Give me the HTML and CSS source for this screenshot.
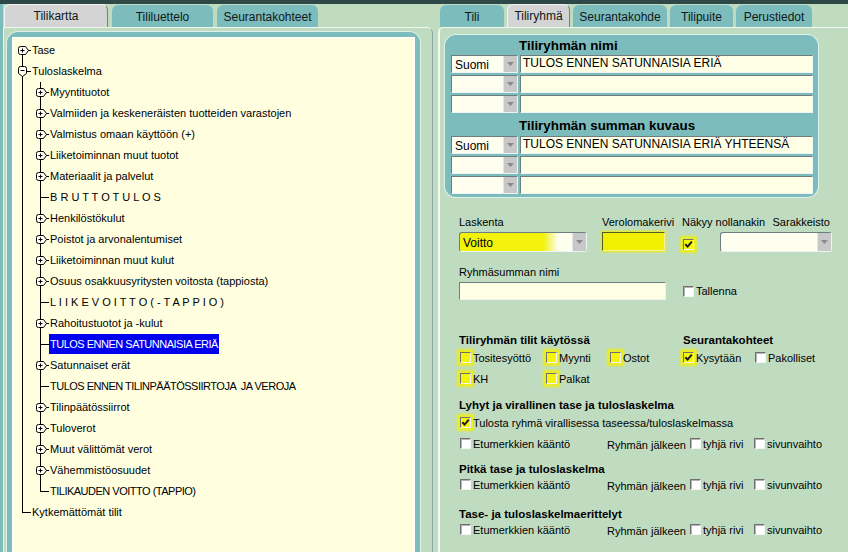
FILE: index.html
```html
<!DOCTYPE html>
<html lang="fi">
<head>
<meta charset="utf-8">
<title>Tiliryhmä</title>
<link rel="stylesheet" href="styles.css">
</head>
<body>
<svg class="sprite" aria-hidden="true">
  <symbol id="i-plus" viewBox="0 0 11 9"><path d="M2.5 .5H7.5L10.5 4.5L7.5 8.5H2.5Q.5 8.5 .5 6.5V2.5Q.5 .5 2.5 .5Z" fill="#fffff4" stroke="#000"/><path d="M2.5 4.5H6.5M4.5 2.5V6.5" stroke="#000"/></symbol>
  <symbol id="i-minus" viewBox="0 0 9 11"><path d="M.5 2.5Q.5 .5 2.5 .5H6.5Q8.5 .5 8.5 2.5V7.5L4.5 10.5L.5 7.5Z" fill="#fffff4" stroke="#000"/><path d="M2.5 4.5H6.5" stroke="#000"/></symbol>
  <symbol id="i-check" viewBox="0 0 9 9"><path d="M1.3 4.2L3.6 6.6L7.8 1.6" fill="none" stroke="#1c1c1c" stroke-width="2"/></symbol>
  <symbol id="i-down" viewBox="0 0 7 4"><path d="M0 0H7L3.5 4Z" fill="#8a8a8a"/></symbol>
</svg>
<div class="topbar"></div>
<div class="main">
  <section class="pane-left">
    <nav class="tabs tabs-left">
      <div class="tab active tab-tilikartta">Tilikartta</div>
      <div class="tab tab-tililuettelo">Tililuettelo</div>
      <div class="tab tab-seurantakohteet">Seurantakohteet</div>
    </nav>
    <div class="body-left">
      <div class="tree-frame">
        <div class="tree">
          <div class="row"><span class="cell start"><svg class="exp"><use href="#i-plus"/></svg></span><span class="lbl">Tase</span></div>
          <div class="row"><span class="cell tee"><svg class="exp-down"><use href="#i-minus"/></svg></span><span class="lbl">Tuloslaskelma</span></div>
          <div class="row"><span class="cell v"></span><span class="cell tee"><svg class="exp"><use href="#i-plus"/></svg></span><span class="lbl">Myyntituotot</span></div>
          <div class="row"><span class="cell v"></span><span class="cell tee"><svg class="exp"><use href="#i-plus"/></svg></span><span class="lbl">Valmiiden ja keskeneräisten tuotteiden varastojen</span></div>
          <div class="row"><span class="cell v"></span><span class="cell tee"><svg class="exp"><use href="#i-plus"/></svg></span><span class="lbl">Valmistus omaan käyttöön (+)</span></div>
          <div class="row"><span class="cell v"></span><span class="cell tee"><svg class="exp"><use href="#i-plus"/></svg></span><span class="lbl">Liiketoiminnan muut tuotot</span></div>
          <div class="row"><span class="cell v"></span><span class="cell tee"><svg class="exp"><use href="#i-plus"/></svg></span><span class="lbl">Materiaalit ja palvelut</span></div>
          <div class="row"><span class="cell v"></span><span class="cell tee"></span><span class="lbl">B R U T T O T U L O S</span></div>
          <div class="row"><span class="cell v"></span><span class="cell tee"><svg class="exp"><use href="#i-plus"/></svg></span><span class="lbl">Henkilöstökulut</span></div>
          <div class="row"><span class="cell v"></span><span class="cell tee"><svg class="exp"><use href="#i-plus"/></svg></span><span class="lbl">Poistot ja arvonalentumiset</span></div>
          <div class="row"><span class="cell v"></span><span class="cell tee"><svg class="exp"><use href="#i-plus"/></svg></span><span class="lbl">Liiketoiminnan muut kulut</span></div>
          <div class="row"><span class="cell v"></span><span class="cell tee"><svg class="exp"><use href="#i-plus"/></svg></span><span class="lbl">Osuus osakkuusyritysten voitosta (tappiosta)</span></div>
          <div class="row"><span class="cell v"></span><span class="cell tee"></span><span class="lbl">L I I K E V O I T T O ( - T A P P I O )</span></div>
          <div class="row"><span class="cell v"></span><span class="cell tee"><svg class="exp"><use href="#i-plus"/></svg></span><span class="lbl">Rahoitustuotot ja -kulut</span></div>
          <div class="row"><span class="cell v"></span><span class="cell tee"></span><span class="lbl sel caps">TULOS ENNEN SATUNNAISIA ERIÄ</span></div>
          <div class="row"><span class="cell v"></span><span class="cell tee"><svg class="exp"><use href="#i-plus"/></svg></span><span class="lbl">Satunnaiset erät</span></div>
          <div class="row"><span class="cell v"></span><span class="cell tee"></span><span class="lbl caps">TULOS ENNEN TILINPÄÄTÖSSIIRTOJA  JA VEROJA</span></div>
          <div class="row"><span class="cell v"></span><span class="cell tee"><svg class="exp"><use href="#i-plus"/></svg></span><span class="lbl">Tilinpäätössiirrot</span></div>
          <div class="row"><span class="cell v"></span><span class="cell tee"><svg class="exp"><use href="#i-plus"/></svg></span><span class="lbl">Tuloverot</span></div>
          <div class="row"><span class="cell v"></span><span class="cell tee"><svg class="exp"><use href="#i-plus"/></svg></span><span class="lbl">Muut välittömät verot</span></div>
          <div class="row"><span class="cell v"></span><span class="cell tee"><svg class="exp"><use href="#i-plus"/></svg></span><span class="lbl">Vähemmistöosuudet</span></div>
          <div class="row"><span class="cell v"></span><span class="cell ell"></span><span class="lbl caps">TILIKAUDEN VOITTO (TAPPIO)</span></div>
          <div class="row"><span class="cell ell"></span><span class="lbl">Kytkemättömät tilit</span></div>
        </div>
      </div>
    </div>
  </section>

  <section class="pane-right">
    <nav class="tabs tabs-right">
      <div class="tab tab-tili">Tili</div>
      <div class="tab active tab-tiliryhma">Tiliryhmä</div>
      <div class="tab tab-seurantakohde">Seurantakohde</div>
      <div class="tab tab-tilipuite">Tilipuite</div>
      <div class="tab tab-perustiedot">Perustiedot</div>
    </nav>
    <div class="body-right">
      <div class="card">
        <div class="card-title">Tiliryhmän nimi</div>
        <div class="lang-row">
          <div class="select lang"><span class="sv">Suomi</span><span class="btn"><svg><use href="#i-down"/></svg></span></div>
          <div class="input long">TULOS ENNEN SATUNNAISIA ERIÄ</div>
        </div>
        <div class="lang-row">
          <div class="select lang"><span class="sv"></span><span class="btn"><svg><use href="#i-down"/></svg></span></div>
          <div class="input long"></div>
        </div>
        <div class="lang-row">
          <div class="select lang"><span class="sv"></span><span class="btn"><svg><use href="#i-down"/></svg></span></div>
          <div class="input long"></div>
        </div>
        <div class="card-title second">Tiliryhmän summan kuvaus</div>
        <div class="lang-row">
          <div class="select lang"><span class="sv">Suomi</span><span class="btn"><svg><use href="#i-down"/></svg></span></div>
          <div class="input long">TULOS ENNEN SATUNNAISIA ERIÄ YHTEENSÄ</div>
        </div>
        <div class="lang-row">
          <div class="select lang"><span class="sv"></span><span class="btn"><svg><use href="#i-down"/></svg></span></div>
          <div class="input long"></div>
        </div>
        <div class="lang-row">
          <div class="select lang"><span class="sv"></span><span class="btn"><svg><use href="#i-down"/></svg></span></div>
          <div class="input long"></div>
        </div>
      </div>

      <div class="form">
        <div class="grid-a">
          <span class="lab">Laskenta</span>
          <span class="lab">Verolomakerivi</span>
          <span class="lab">Näkyy nollanakin</span>
          <span class="lab right">Sarakkeisto</span>
          <div class="select laskenta"><span class="sv">Voitto</span><span class="btn"><svg><use href="#i-down"/></svg></span></div>
          <div class="input vero"></div>
          <span class="cb hl nakyy"><svg><use href="#i-check"/></svg></span>
          <div class="select sarake"><span class="sv"></span><span class="btn"><svg><use href="#i-down"/></svg></span></div>
        </div>

        <div class="grid-b">
          <span class="lab">Ryhmäsumman nimi</span>
          <span></span>
          <div class="input ryhma"></div>
          <label class="chk ml1"><span class="cb"></span>Tallenna</label>
        </div>

        <div class="sec sec-1">
          <b class="h span3">Tiliryhmän tilit käytössä</b>
          <b class="h span-rest">Seurantakohteet</b>
          <label class="chk ml1"><span class="cb hl"></span>Tositesyöttö</label>
          <label class="chk"><span class="cb hl"></span>Myynti</label>
          <label class="chk"><span class="cb hl"></span>Ostot</label>
          <label class="chk"><span class="cb hl"><svg><use href="#i-check"/></svg></span>Kysytään</label>
          <label class="chk"><span class="cb"></span>Pakolliset</label>
          <label class="chk ml1"><span class="cb hl"></span>KH</label>
          <label class="chk"><span class="cb hl"></span>Palkat</label>
        </div>

        <div class="sec sec-2">
          <b class="h span-all">Lyhyt ja virallinen tase ja tuloslaskelma</b>
          <label class="chk ml1 span-all"><span class="cb hl"><svg><use href="#i-check"/></svg></span>Tulosta ryhmä virallisessa taseessa/tuloslaskelmassa</label>
          <label class="chk ml1"><span class="cb"></span>Etumerkkien kääntö</label>
          <span class="after">Ryhmän jälkeen</span>
          <label class="chk"><span class="cb"></span>tyhjä rivi</label>
          <label class="chk"><span class="cb"></span>sivunvaihto</label>
        </div>

        <div class="sec sec-3">
          <b class="h span-all">Pitkä tase ja tuloslaskelma</b>
          <label class="chk ml1"><span class="cb"></span>Etumerkkien kääntö</label>
          <span class="after">Ryhmän jälkeen</span>
          <label class="chk"><span class="cb"></span>tyhjä rivi</label>
          <label class="chk"><span class="cb"></span>sivunvaihto</label>
        </div>

        <div class="sec sec-4">
          <b class="h span-all">Tase- ja tuloslaskelmaerittelyt</b>
          <label class="chk ml1"><span class="cb"></span>Etumerkkien kääntö</label>
          <span class="after">Ryhmän jälkeen</span>
          <label class="chk"><span class="cb"></span>tyhjä rivi</label>
          <label class="chk"><span class="cb"></span>sivunvaihto</label>
        </div>
      </div>
    </div>
  </section>
</div>
</body>
</html>
```

FILE: styles.css
```css
* { box-sizing: border-box; }
html, body { margin: 0; padding: 0; }
body {
  width: 848px;
  height: 552px;
  overflow: hidden;
  background: #c0dcc0;
  font-family: "Liberation Sans", Arial, sans-serif;
  font-size: 11px;
  color: #000;
}
.sprite { position: absolute; width: 0; height: 0; overflow: hidden; }

.topbar { height: 4px; background: #2e4848; }
.main { display: flex; height: 548px; }

/* tabs */
.tabs { display: flex; align-items: flex-end; height: 23px; flex: none; }
.tab {
  height: 22px;
  padding-top: 4px;
  line-height: 16px;
  font-size: 12px;
  text-align: center;
  white-space: nowrap;
  background: #7cbcbc;
  color: #101818;
  border-radius: 6px 6px 0 0;
}
.tab.active {
  height: 23px;
  padding-top: 3px;
  background: #d4d4d4;
  border-top: 1px solid #f4f4f4;
  border-left: 1px solid #f4f4f4;
  border-right: 1px solid #7c7c7c;
}
.tab-tilikartta { width: 104px; }
.tab-tililuettelo { width: 101px; }
.tab-seurantakohteet { width: 101px; }
.tab-tili { width: 64px; }
.tab-tiliryhma { width: 63px; }
.tab-seurantakohde { width: 94px; }
.tab-tilipuite { width: 63px; }
.tab-perustiedot { width: 76px; }

/* left pane */
.pane-left {
  width: 433px;
  flex: none;
  display: flex;
  flex-direction: column;
  border-left: 3px solid #7cbcbc;
}
.tabs-left { padding-left: 1px; gap: 4px; }
.body-left {
  flex: 1;
  display: flex;
  flex-direction: column;
  border-top: 1px solid #eef7ee;
  border-left: 1px solid #eef7ee;
  border-right: 1px solid #8ea6a6;
  border-top-right-radius: 6px;
  padding: 4px 12px 0 3px;
}
.tree-frame {
  flex: 1;
  display: flex;
  flex-direction: column;
  background: #7cbcbc;
  border-radius: 11px 11px 0 0;
  padding: 5px 5px 0;
  box-shadow: 0 0 0 1px #e2f0ea;
}
.tree {
  flex: 1;
  background: #ffffe0;
  border: 1px solid #fff;
  border-bottom: 0;
  padding-top: 2px;
}
.row { display: flex; align-items: flex-start; height: 21px; }
.cell { flex: none; width: 18px; height: 21px; position: relative; }
.cell::before, .cell::after { content: ""; position: absolute; }
.v::before, .tee::before { left: 9px; top: 0; bottom: 0; border-left: 1px solid #000; }
.start::before { left: 9px; top: 10px; bottom: 0; border-left: 1px solid #000; }
.ell::before { left: 9px; top: 0; height: 11px; border-left: 1px solid #000; }
.tee::after, .start::after, .ell::after { left: 9px; right: 0; top: 10px; border-top: 1px solid #000; }
.exp { position: absolute; left: 5px; top: 6px; width: 11px; height: 9px; z-index: 1; }
.exp-down { position: absolute; left: 5px; top: 5px; width: 9px; height: 11px; z-index: 1; }
.lbl { padding: 0 1px; line-height: 21px; white-space: pre; }
.lbl.sel { background: #0000f0; color: #fff; height: 20px; line-height: 20px; }
.caps { letter-spacing: -0.5px; }

/* right pane */
.pane-right { flex: 1; display: flex; flex-direction: column; margin-left: 5px; }
.tabs-right { padding-left: 2px; gap: 3px; }
.body-right {
  flex: 1;
  border-left: 2px solid #f2f9f2;
  border-top: 1px solid #f2f9f2;
  border-top-left-radius: 5px;
  padding: 7px 0 0 5px;
}
.card {
  width: 373px;
  background: #7cbcbc;
  border-radius: 11px;
  padding: 1px 5px 3px 6px;
  box-shadow: 0 0 0 1px #e2f0ea;
}
.card-title {
  height: 19px;
  line-height: 19px;
  padding-left: 68px;
  font-size: 13.4px;
  font-weight: bold;
}
.card-title.second { margin-top: 2px; height: 21px; line-height: 21px; }
.lang-row { display: flex; gap: 2px; height: 18px; }
.lang-row + .lang-row { margin-top: 2px; }

.select {
  display: flex;
  border: 1px solid;
  border-color: #6e7e7e #eef4f4 #eef4f4 #6e7e7e;
  background: #fffff0;
  font-size: 12px;
}
.select .sv { flex: 1; padding: 2px 0 0 3px; line-height: 14px; white-space: nowrap; overflow: hidden; }
.select .btn {
  flex: none;
  width: 14px;
  background: #c8c8c8;
  border-left: 1px solid #e4e4e4;
  display: flex;
  align-items: center;
  justify-content: center;
}
.select .btn svg { width: 7px; height: 4px; }
.lang { width: 67px; }
.input {
  border: 1px solid;
  border-color: #6e7e7e #eef4f4 #eef4f4 #6e7e7e;
  background: #ffffe6;
  font-size: 12px;
  line-height: 13px;
  padding: 1px 0 0 2px;
  white-space: nowrap;
}
.long { flex: 1; }

/* lower form */
.form { padding-left: 14px; }
.lab { line-height: 13px; white-space: nowrap; }
.lab.right { text-align: right; padding-right: 2px; }
.grid-a {
  display: grid;
  grid-template-columns: 143px 80px 38px 112px;
  grid-template-rows: 13px 20px;
  row-gap: 3px;
  margin-top: 19px;
}
.laskenta {
  width: 128px;
  border-radius: 3px;
  background: linear-gradient(to right, #f2f20c 0, #f2f20c 66%, #f6f684 72%, #fffff0 78%);
}
.laskenta .sv { padding-top: 3px; }
.vero {
  width: 63px;
  height: 19px;
  background: #f0f000;
  border-color: #505a2a #f4f4a0 #f4f4a0 #505a2a;
  box-shadow: 0 0 2px 1px #eef000;
}
.nakyy { align-self: end; margin: 0 0 2px 1px; }
.sarake { width: 112px; border-radius: 3px; }

.grid-b {
  display: grid;
  grid-template-columns: 223px auto;
  grid-template-rows: 13px 18px;
  row-gap: 3px;
  margin-top: 14px;
}
.ryhma { width: 207px; height: 18px; }

.cb {
  flex: none;
  display: inline-flex;
  width: 11px;
  height: 11px;
  background: #fff;
  border: 1px solid;
  border-color: #707070 #f4f4f4 #f4f4f4 #707070;
  box-shadow: inset 1px 1px 0 #b4b4b4;
}
.cb svg { width: 9px; height: 9px; }
.cb.hl { background: #f4f40c; box-shadow: 0 0 2px 3px rgba(240, 240, 10, 0.85); }
.chk { display: flex; align-items: center; gap: 2px; white-space: nowrap; }
.ml1 { margin-left: 1px; }

.sec { display: grid; }
.sec-1 {
  grid-template-columns: 87px 64px 73px 72px auto;
  grid-template-rows: 14px 21px 21px;
  margin-top: 33px;
}
.sec-2 {
  grid-template-columns: 148px 83px 64px auto;
  grid-template-rows: 14px 21px 21px;
  margin-top: 9px;
}
.sec-3, .sec-4 {
  grid-template-columns: 148px 83px 64px auto;
  grid-template-rows: 13px 17px;
}
.sec-3 { margin-top: 9px; }
.sec-4 { margin-top: 15px; }
.h { font-weight: bold; font-size: 11.5px; line-height: 14px; white-space: nowrap; }
.sec-3 .h, .sec-4 .h { line-height: 13px; }
.span3 { grid-column: 1 / span 3; }
.span-rest { grid-column: 4 / span 2; }
.span-all { grid-column: 1 / -1; }
.after { align-self: center; padding-top: 3px; line-height: 13px; white-space: nowrap; }
```
